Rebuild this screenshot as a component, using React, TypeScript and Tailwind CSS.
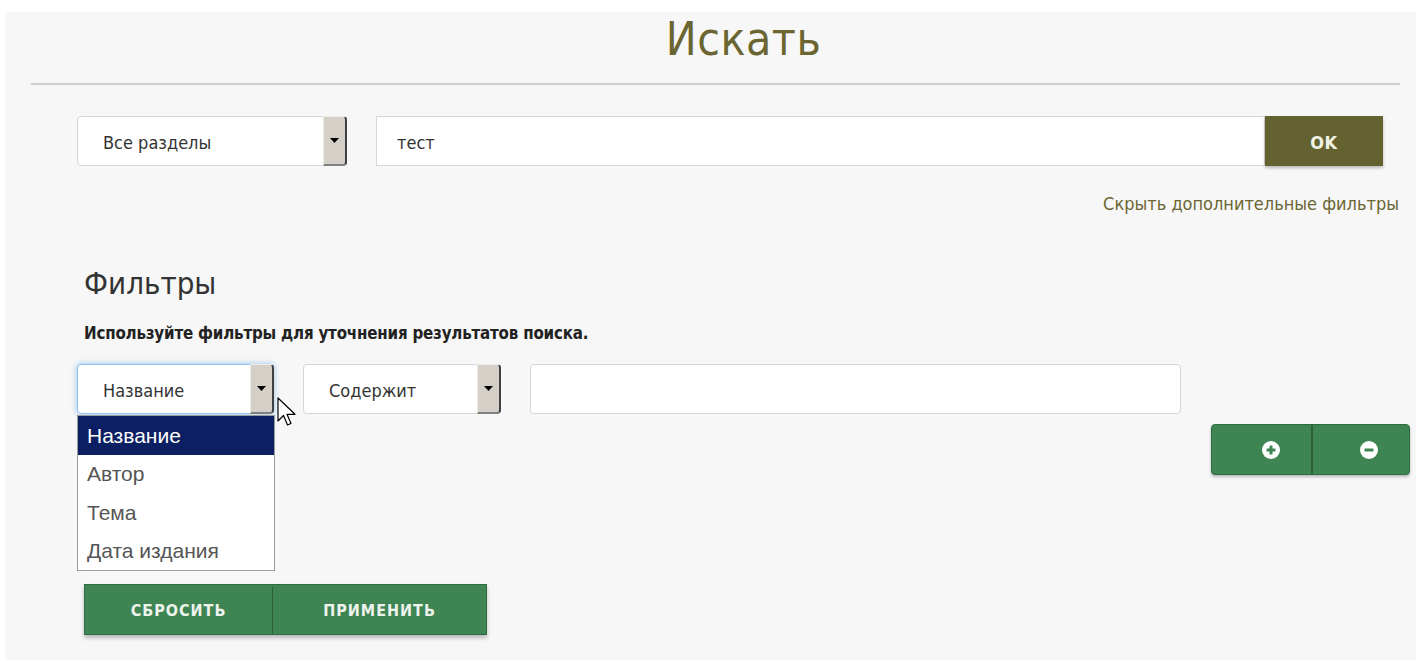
import React from 'react';

const narrow = "font-['DejaVu_Sans_Condensed','DejaVu_Sans',sans-serif]";

function SelectBox({ label, width, focused }: { label: string; width: string; focused?: boolean }) {
    return (
        <div
            className={`flex h-[50px] ${width} items-stretch rounded-[4px] border bg-white ${
                focused ? 'border-[#8fc1ee] shadow-[0_0_6px_rgba(102,175,233,0.7)]' : 'border-[#d6d6d6]'
            }`}
        >
            <div className="flex flex-1 items-center pl-[25px] pt-[3px] text-[18px] text-[#333]">{label}</div>
            <div className="my-[-1px] mr-[-1px] flex w-[24px] items-center justify-center rounded-r-[4px] border-t border-l border-t-[#eeebe4] border-l-[#eeebe4] border-r-2 border-b-2 border-r-[#404040] border-b-[#808080] bg-[#d4d0c8]">
                <svg width="9" height="5" viewBox="0 0 9 5">
                    <path d="M0 0h9L4.5 5z" fill="#000" />
                </svg>
            </div>
        </div>
    );
}

function CircleIcon({ minus }: { minus?: boolean }) {
    return (
        <svg width="20" height="20" viewBox="0 0 20 20">
            <circle cx="10" cy="10" r="9" fill="#fff" />
            <rect x="5.5" y="8.5" width="9" height="3" rx="0.5" fill="#3f8553" />
            {!minus && <rect x="8.5" y="5.5" width="3" height="9" rx="0.5" fill="#3f8553" />}
        </svg>
    );
}

function Cursor() {
    return (
        <svg width="20" height="34" viewBox="0 0 20 34" className="absolute left-[200px] top-[33px]">
            <path
                d="M1 1v23l5.5-5.5 4 9.5 3.5-1.5-4-9.2h8z"
                fill="#fff"
                stroke="#000"
                strokeWidth="1.2"
                strokeLinejoin="round"
            />
        </svg>
    );
}

export default function App() {
    const options = ['Название', 'Автор', 'Тема', 'Дата издания'];

    return (
        <div className="min-h-[661px] bg-white pt-[12px] pl-[5px]">
            <div className={`h-[648px] bg-[#f7f7f7] ${narrow}`}>
                {/* heading */}
                <h1 className="flex h-[50px] items-end justify-center pl-[66px] text-[46px] leading-none tracking-[0.5px] text-[#6b6532]">
                    Искать
                </h1>
                <div className="ml-[26px] mr-[16px] mt-[21px] h-[2px] bg-[#cfcfcf]" />

                {/* search row */}
                <div className="mt-[31px] flex pl-[72px] pr-[33px]">
                    <SelectBox label="Все разделы" width="w-[270px]" />
                    <div className="ml-[29px] flex h-[50px] flex-1 items-center border border-[#d6d6d6] bg-white pl-[20px] pt-[3px] text-[18px] text-[#333]">
                        тест
                    </div>
                    <button className="h-[50px] w-[118px] bg-[#656232] pt-[2px] text-[18px] font-bold tracking-[0.5px] text-[#f2f2e4] shadow-[0_2px_3px_rgba(0,0,0,0.25)]">
                        OK
                    </button>
                </div>

                <div className="mt-[24px] flex justify-end pr-[17px]">
                    <a className="text-[18px] text-[#6b6532]">Скрыть дополнительные фильтры</a>
                </div>

                {/* filters */}
                <div className="pl-[79px] pr-[6px]">
                    <h2 className="mt-[46px] text-[31px] leading-[40px] text-[#333]">Фильтры</h2>
                    <p className="mt-[19px] text-[16.8px] leading-[22px] font-semibold tracking-[-0.2px] text-[#222]">
                        Используйте фильтры для уточнения результатов поиска.
                    </p>

                    <div className="mt-[20px] ml-[-7px] flex gap-[29px]">
                        <div className="relative">
                            <SelectBox label="Название" width="w-[197px]" focused />
                            <Cursor />
                            <ul className="absolute left-0 top-[51px] z-10 w-[198px] border border-[#9a9a9a] bg-white font-['Liberation_Sans',Arial,sans-serif] text-[21px]">
                                {options.map((o, i) => (
                                    <li
                                        key={o}
                                        className={`flex h-[38.5px] items-center pl-[9px] ${
                                            i === 0 ? 'bg-[#0b1f62] text-white' : 'text-[#555]'
                                        }`}
                                    >
                                        {o}
                                    </li>
                                ))}
                            </ul>
                        </div>
                        <SelectBox label="Содержит" width="w-[198px]" />
                        <div className="h-[50px] w-[651px] rounded-[4px] border border-[#d6d6d6] bg-white" />
                    </div>

                    <div className="mt-[10px] flex justify-end">
                        <div className="flex h-[51px] w-[199px] overflow-hidden rounded-[4px] border border-[#2f6b41] bg-[#3f8553] shadow-[0_2px_3px_rgba(0,0,0,0.25)]">
                            <button className="flex flex-1 items-center justify-center border-r-2 border-[#2c6038] pl-[19px]">
                                <CircleIcon />
                            </button>
                            <button className="flex flex-1 items-center justify-center pl-[16px]">
                                <CircleIcon minus />
                            </button>
                        </div>
                    </div>

                    <div className="mt-[109px] flex">
                        <div className="flex h-[51px] border border-[#2f6b41] bg-[#3f8553] pt-[2px] text-[16px] font-semibold tracking-[1px] text-[#eef3ee] shadow-[0_3px_4px_rgba(0,0,0,0.25)]">
                            <button className="w-[188px] border-r border-[#2c6038]">СБРОСИТЬ</button>
                            <button className="w-[213px]">ПРИМЕНИТЬ</button>
                        </div>
                    </div>
                </div>
            </div>
        </div>
    );
}
